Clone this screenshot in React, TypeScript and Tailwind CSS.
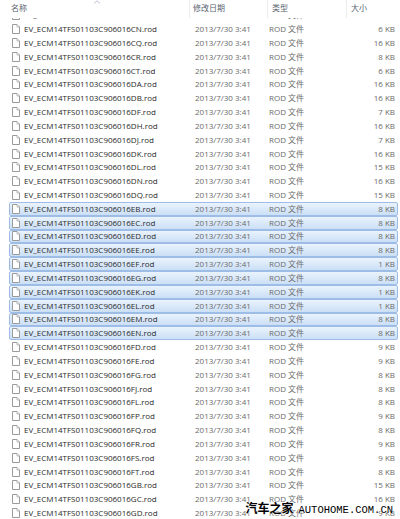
import React from "react";

type Row = { code: string; size: number; sel?: boolean };

const rows: Row[] = [
  { code: "CN", size: 6 },
  { code: "CQ", size: 16 },
  { code: "CR", size: 8 },
  { code: "CT", size: 6 },
  { code: "DA", size: 16 },
  { code: "DB", size: 16 },
  { code: "DF", size: 7 },
  { code: "DH", size: 16 },
  { code: "DJ", size: 7 },
  { code: "DK", size: 16 },
  { code: "DL", size: 15 },
  { code: "DN", size: 16 },
  { code: "DQ", size: 15 },
  { code: "EB", size: 8, sel: true },
  { code: "EC", size: 8, sel: true },
  { code: "ED", size: 8, sel: true },
  { code: "EE", size: 8, sel: true },
  { code: "EF", size: 1, sel: true },
  { code: "EG", size: 8, sel: true },
  { code: "EK", size: 1, sel: true },
  { code: "EL", size: 1, sel: true },
  { code: "EM", size: 8, sel: true },
  { code: "EN", size: 8, sel: true },
  { code: "FD", size: 9 },
  { code: "FE", size: 9 },
  { code: "FG", size: 8 },
  { code: "FJ", size: 8 },
  { code: "FL", size: 8 },
  { code: "FP", size: 9 },
  { code: "FQ", size: 8 },
  { code: "FR", size: 9 },
  { code: "FS", size: 9 },
  { code: "FT", size: 8 },
  { code: "GB", size: 15 },
  { code: "GC", size: 16 },
  { code: "GD", size: 9 },
];

function FileIcon() {
  return (
    <svg width="8" height="10" viewBox="0 0 8 10" className="shrink-0">
      <path d="M0.5 0.5 H5 L7.5 3 V9.5 H0.5 Z" fill="#ffffff" stroke="#9a9a9a" strokeWidth="1" />
      <path d="M5 0.5 V3 H7.5" fill="#eeeeee" stroke="#a8a8a8" strokeWidth="0.8" />
    </svg>
  );
}

function FileRow({ row }: { row: Row }) {
  const base =
    "flex items-center h-[13.83px] ml-[9px] mr-[2px] font-['Open_Sans','Noto_Sans_CJK_SC',sans-serif] text-[8px] leading-none";
  const cls = row.sel
    ? base + " border border-[#9dbde6] rounded-[2px] bg-gradient-to-b from-[#eaf3fd] to-[#cbdff6]"
    : base + " border border-transparent";
  return (
    <div className={cls}>
      <div className="w-[181px] flex items-center gap-[4px] pl-[2px] shrink-0">
        <FileIcon />
        <span className="text-[#2a2a2a] whitespace-nowrap">EV_ECM14TFS01103C906016{row.code}.rod</span>
      </div>
      <div className="w-[78px] pl-[4px] shrink-0 text-[#6a6a6a] whitespace-nowrap">2013/7/30 3:41</div>
      <div className="w-[70px] shrink-0 text-[#6a6a6a] whitespace-nowrap">ROD 文件</div>
      <div className="flex-1 text-right pr-[2px] text-[#6a6a6a] whitespace-nowrap">{row.size} KB</div>
    </div>
  );
}

export default function App() {
  return (
    <div className="relative w-[400px] h-[519px] overflow-hidden bg-white flex flex-col">
      <div className="h-[18px] shrink-0 flex items-start font-['Noto_Sans_CJK_SC',sans-serif] text-[8px] text-[#5a6370] leading-none bg-white relative z-10">
        <div className="w-[190px] h-full pl-[11px] pt-[4px] relative border-r border-[#ececec]">
          名称
          <svg width="8" height="4" viewBox="0 0 8 4" className="absolute left-[93px] top-[0px]">
            <path d="M1 3.5 L4 0.8 L7 3.5" fill="none" stroke="#b8c2cf" strokeWidth="1" />
          </svg>
        </div>
        <div className="w-[78px] h-full pl-[3px] pt-[4px] border-r border-[#ececec]">修改日期</div>
        <div className="w-[79px] h-full pl-[4px] pt-[4px] border-r border-[#ececec]">类型</div>
        <div className="flex-1 h-full pl-[4px] pt-[4px]">大小</div>
      </div>
      <div className="flex-1 overflow-hidden">
        <div className="-mt-[9.7px]">
          <FileRow row={{ code: "CM", size: 16 }} />
          {rows.map((r) => (
            <FileRow key={r.code} row={r} />
          ))}
        </div>
      </div>
      <div className="absolute right-[7px] bottom-[4px] flex items-baseline text-black [text-shadow:0_0_2px_#fff,0_0_2px_#fff]">
        <span className="font-['Noto_Sans_CJK_SC',sans-serif] text-[12px] font-bold leading-none">汽车之家</span>
        <span className="font-['Liberation_Mono',monospace] text-[10.5px] leading-none ml-[5px]">AUTOHOME.COM.CN</span>
      </div>
    </div>
  );
}
